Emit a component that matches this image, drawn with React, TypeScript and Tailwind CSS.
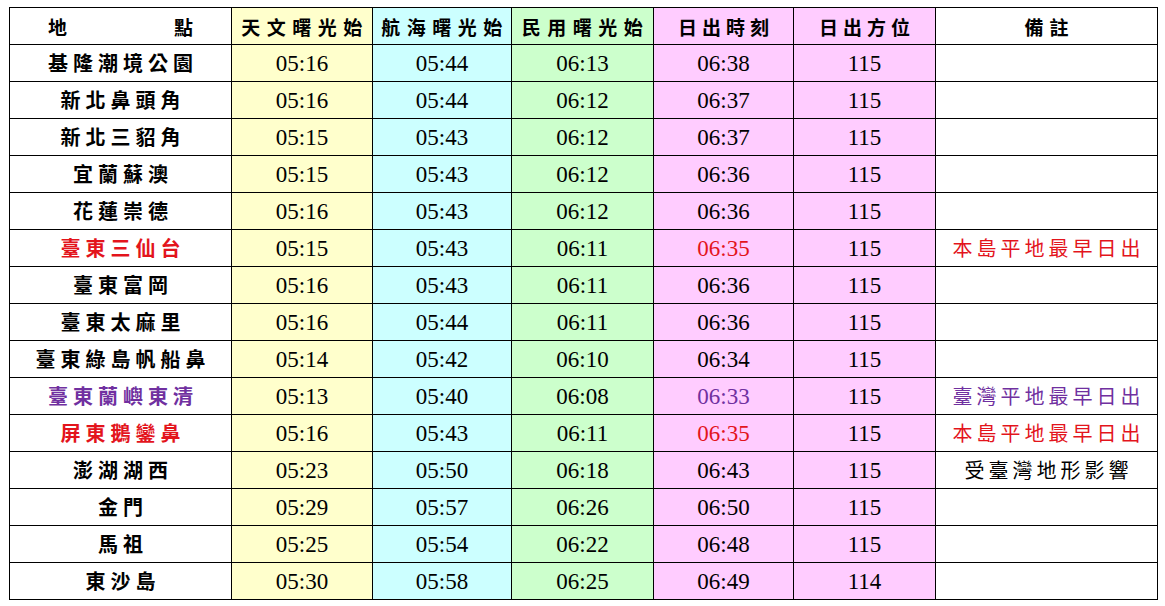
import React from 'react';

type Row = {
  place: string;
  astro: string;
  nautical: string;
  civil: string;
  sunrise: string;
  azimuth: string;
  note?: string;
  tone?: 'red' | 'purple';
};

const rows: Row[] = [
  { place: '基隆潮境公園', astro: '05:16', nautical: '05:44', civil: '06:13', sunrise: '06:38', azimuth: '115' },
  { place: '新北鼻頭角', astro: '05:16', nautical: '05:44', civil: '06:12', sunrise: '06:37', azimuth: '115' },
  { place: '新北三貂角', astro: '05:15', nautical: '05:43', civil: '06:12', sunrise: '06:37', azimuth: '115' },
  { place: '宜蘭蘇澳', astro: '05:15', nautical: '05:43', civil: '06:12', sunrise: '06:36', azimuth: '115' },
  { place: '花蓮崇德', astro: '05:16', nautical: '05:43', civil: '06:12', sunrise: '06:36', azimuth: '115' },
  { place: '臺東三仙台', astro: '05:15', nautical: '05:43', civil: '06:11', sunrise: '06:35', azimuth: '115', note: '本島平地最早日出', tone: 'red' },
  { place: '臺東富岡', astro: '05:16', nautical: '05:43', civil: '06:11', sunrise: '06:36', azimuth: '115' },
  { place: '臺東太麻里', astro: '05:16', nautical: '05:44', civil: '06:11', sunrise: '06:36', azimuth: '115' },
  { place: '臺東綠島帆船鼻', astro: '05:14', nautical: '05:42', civil: '06:10', sunrise: '06:34', azimuth: '115' },
  { place: '臺東蘭嶼東清', astro: '05:13', nautical: '05:40', civil: '06:08', sunrise: '06:33', azimuth: '115', note: '臺灣平地最早日出', tone: 'purple' },
  { place: '屏東鵝鑾鼻', astro: '05:16', nautical: '05:43', civil: '06:11', sunrise: '06:35', azimuth: '115', note: '本島平地最早日出', tone: 'red' },
  { place: '澎湖湖西', astro: '05:23', nautical: '05:50', civil: '06:18', sunrise: '06:43', azimuth: '115', note: '受臺灣地形影響' },
  { place: '金門', astro: '05:29', nautical: '05:57', civil: '06:26', sunrise: '06:50', azimuth: '115' },
  { place: '馬祖', astro: '05:25', nautical: '05:54', civil: '06:22', sunrise: '06:48', azimuth: '115' },
  { place: '東沙島', astro: '05:30', nautical: '05:58', civil: '06:25', sunrise: '06:49', azimuth: '114' },
];

const cjk = "font-['Noto_Sans_CJK_TC',sans-serif]";
const num = "font-['Liberation_Serif',serif] text-[23px]";
const cell = 'h-[37px] border border-black text-center align-middle p-0';

export default function App() {
  const toneClass = (tone?: Row['tone']) =>
    tone === 'red' ? 'text-[#e3141c]' : tone === 'purple' ? 'text-[#7030a0]' : 'text-black';

  return (
    <div className="min-h-[606px] w-[1165px] bg-white pl-[9px] pt-[7px]">
      <table className="w-[1148px] table-fixed border-collapse">
        <colgroup>
          <col className="w-[222px]" />
          <col className="w-[141px]" />
          <col className="w-[139px]" />
          <col className="w-[142px]" />
          <col className="w-[140px]" />
          <col className="w-[142px]" />
          <col className="w-[222px]" />
        </colgroup>
        <thead>
          <tr className={`${cjk} text-[19px] font-bold leading-none`}>
            <th className={`${cell} bg-white`}>
              <div className="flex justify-between px-[38px]">
                <span>地</span>
                <span>點</span>
              </div>
            </th>
            <th className={`${cell} bg-[#ffffcc] tracking-[6.5px] pl-[6px]`}>天文曙光始</th>
            <th className={`${cell} bg-[#ccffff] tracking-[6.5px] pl-[6px]`}>航海曙光始</th>
            <th className={`${cell} bg-[#ccffcc] tracking-[6.5px] pl-[6px]`}>民用曙光始</th>
            <th className={`${cell} bg-[#ffccff] tracking-[5px] pl-[5px]`}>日出時刻</th>
            <th className={`${cell} bg-[#ffccff] tracking-[5px] pl-[5px]`}>日出方位</th>
            <th className={`${cell} bg-white tracking-[6px] pl-[6px]`}>備註</th>
          </tr>
        </thead>
        <tbody>
          {rows.map((r) => (
            <tr key={r.place} className="leading-none">
              <td className={`${cell} bg-white ${cjk} text-[20px] font-bold tracking-[5px] pl-[5px] ${toneClass(r.tone)}`}>
                {r.place}
              </td>
              <td className={`${cell} bg-[#ffffcc] ${num}`}>{r.astro}</td>
              <td className={`${cell} bg-[#ccffff] ${num}`}>{r.nautical}</td>
              <td className={`${cell} bg-[#ccffcc] ${num}`}>{r.civil}</td>
              <td className={`${cell} bg-[#ffccff] ${num} ${toneClass(r.tone)}`}>{r.sunrise}</td>
              <td className={`${cell} bg-[#ffccff] ${num}`}>{r.azimuth}</td>
              <td className={`${cell} bg-white ${cjk} text-[20px] tracking-[4px] pl-[4px] ${toneClass(r.tone)}`}>
                {r.note ?? ''}
              </td>
            </tr>
          ))}
        </tbody>
      </table>
    </div>
  );
}
